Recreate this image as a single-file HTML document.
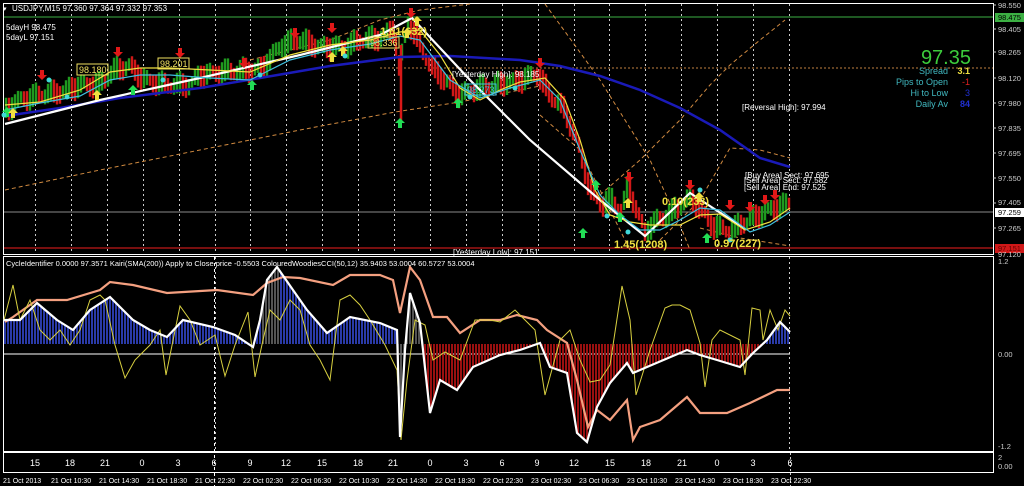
<!DOCTYPE html>
<html><head><meta charset="utf-8">
<style>
html,body{margin:0;padding:0;background:#000;overflow:hidden}
svg{display:block;font-family:"Liberation Sans",sans-serif}
</style></head><body>
<svg id="s" width="1024" height="486" viewBox="0 0 1024 486" xmlns="http://www.w3.org/2000/svg">
<rect width="1024" height="486" fill="#000"/>
<g id="grid"></g>
<rect x="3.5" y="3.5" width="990" height="251" fill="none" stroke="#fff" stroke-width="1"/>
<rect x="3.5" y="256.5" width="990" height="195" fill="none" stroke="#fff" stroke-width="1"/>
<rect x="3.5" y="452.5" width="990" height="20" fill="none" stroke="#fff" stroke-width="1"/>
<line x1="4" y1="17" x2="993" y2="17" stroke="#3cb043" stroke-width="1"/>
<line x1="4" y1="212" x2="993" y2="212" stroke="#8a8a8a" stroke-width="1"/>
<line x1="4" y1="248" x2="993" y2="248" stroke="#c01818" stroke-width="1.3"/>
<line x1="380" y1="68" x2="993" y2="68" stroke="#c08040" stroke-width="1" stroke-dasharray="2,2"/>
<line x1="4" y1="354" x2="790" y2="354" stroke="#fff" stroke-width="1"/>
<g fill="none" stroke="#d08a40" stroke-width="1" stroke-dasharray="4,3">
<polyline points="5,190 100,170 200,150 300,130 395,112 460,102 540,86"/>
<polyline points="250,60 330,40 380,20 420,10 470,4"/>
<polyline points="545,4 600,80 650,160 680,225 690,250"/>
<polyline points="600,195 640,160 680,120 710,85 730,65 760,40 785,20"/>
<polyline points="660,240 700,200 730,148 760,150 790,158"/>
<polyline points="540,115 580,150 610,210 630,250"/>
<polyline points="700,228 740,238 790,246"/>
</g>
<g id="candles"></g>
<g id="lower"></g>
<polyline fill="none" stroke="#1a1ab8" stroke-width="2.5" points="5,116 60,108 120,98 200,88 260,78 330,66 400,57 450,56 520,60 560,66 600,76 640,90 680,108 720,130 760,158 790,167"/>
<polyline fill="none" stroke="#fff" stroke-width="2.2" points="5,124 100,100 200,78 300,55 380,35 412,18 470,80 530,140 600,200 645,236 690,193 745,229"/>
<polyline fill="none" stroke="#f0e040" stroke-width="1.2" points="5,105 40,102 80,90 110,72 140,68 170,68 210,70 250,72 290,55 330,45 370,40 400,32 420,30 440,55 460,88 480,100 500,90 520,82 545,78 565,100 580,140 595,190 610,215 630,222 650,225 680,225 700,215 720,214 745,230 770,222 790,208"/>
<polyline fill="none" stroke="#40c0e0" stroke-width="1.2" points="5,110 40,103 80,96 110,80 140,75 170,75 210,78 250,80 290,60 330,50 370,44 400,36 420,40 450,80 480,98 510,88 540,80 560,100 580,150 600,195 620,215 640,230 660,230 680,220 700,208 720,210 750,232 770,225 790,212"/>
<g id="marks"></g>
<g font-size="8" fill="#fff">
<text x="3" y="11" font-size="7">▾</text>
<text x="12" y="11">USDJPY,M15  97.360 97.364 97.332 97.353</text>
<text x="6" y="30">5dayH 98.475</text>
<text x="6" y="40">5dayL 97.151</text>
<text x="452" y="77">[Yesterday High]: 98.185</text>
<text x="742" y="110">[Reversal High]: 97.994</text>
<text x="745" y="178">[Buy Area] Sect: 97.695</text>
<text x="744" y="183">[Sell Area] Sect: 97.582</text>
<text x="744" y="190">[Sell Area] End: 97.525</text>
<text x="453" y="255">[Yesterday Low]: 97.151</text>
</g>
<g font-size="9" fill="#f0e060">
<rect x="77" y="64" width="31" height="11" fill="none" stroke="#f0e060"/><text x="79" y="73">98.180</text>
<rect x="158" y="58" width="31" height="11" fill="none" stroke="#f0e060"/><text x="160" y="67">98.201</text>
<rect x="368" y="37" width="31" height="11" fill="none" stroke="#f0e060"/><text x="370" y="46">98.336</text>
<rect x="465" y="84" width="31" height="11" fill="none" stroke="#40c0e0"/><text x="467" y="93" fill="#40c0e0">98.273</text>
</g>
<g font-size="11" font-weight="bold" fill="#f0e040">
<text x="380" y="35">1.61(632)</text>
<text x="662" y="205">0.10(233)</text>
<text x="614" y="248">1.45(1208)</text>
<text x="714" y="247">0.97(227)</text>
</g>
<g font-size="9" text-anchor="end">
<text x="971" y="64" font-size="20" fill="#3ccc3c">97.35</text>
<text x="948" y="74" fill="#40b8c0">Spread</text><text x="970" y="74" fill="#f0e040" font-weight="bold">3.1</text>
<text x="948" y="85" fill="#40b8c0">Pips to Open</text><text x="970" y="85" fill="#e02020">-1</text>
<text x="948" y="96" fill="#40b8c0">Hi to Low</text><text x="970" y="96" fill="#2030d0">3</text>
<text x="948" y="107" fill="#40b8c0">Daily Av</text><text x="970" y="107" fill="#2030d0" font-weight="bold">84</text>
</g>
<g font-size="7.5" fill="#ccc">
<text x="998" y="8">98.550</text>
<rect x="995" y="13" width="29" height="9" fill="#3cb043"/><text x="998" y="20" fill="#000">98.475</text>
<text x="998" y="32">98.405</text>
<text x="998" y="55">98.265</text>
<text x="998" y="81">98.120</text>
<text x="998" y="106">97.980</text>
<text x="998" y="131">97.835</text>
<text x="998" y="156">97.695</text>
<text x="998" y="181">97.550</text>
<text x="998" y="205">97.405</text>
<rect x="995" y="208" width="29" height="9" fill="#fff"/><text x="998" y="215" fill="#000">97.259</text>
<text x="998" y="231">97.265</text>
<rect x="995" y="244" width="29" height="9" fill="#d01818"/><text x="998" y="251" fill="#600">97.151</text>
<text x="998" y="257">97.120</text>
<text x="998" y="264">1.2</text>
<text x="998" y="357">0.00</text>
<text x="998" y="449">-1.2</text>
<text x="998" y="460">2</text>
<text x="998" y="469">0.00</text>
</g>
<g stroke="#ccc"><line x1="993" y1="5" x2="996" y2="5"/><line x1="993" y1="29" x2="996" y2="29"/><line x1="993" y1="52" x2="996" y2="52"/><line x1="993" y1="78" x2="996" y2="78"/><line x1="993" y1="103" x2="996" y2="103"/><line x1="993" y1="128" x2="996" y2="128"/><line x1="993" y1="153" x2="996" y2="153"/><line x1="993" y1="178" x2="996" y2="178"/><line x1="993" y1="203" x2="996" y2="203"/><line x1="993" y1="228" x2="996" y2="228"/></g>
<text x="6" y="266" font-size="7.5" fill="#fff">CycleIdentifier 0.0000 97.3571  Kairi(SMA(200)) Apply to Close price -0.5503  ColouredWoodiesCCI(50,12) 35.9403 53.0004 60.5727 53.0004</text>
<g font-size="9" fill="#fff" text-anchor="middle">
<text x="35" y="466">15</text><text x="70" y="466">18</text><text x="105" y="466">21</text><text x="142" y="466">0</text><text x="178" y="466">3</text><text x="214" y="466">6</text><text x="250" y="466">9</text><text x="286" y="466">12</text><text x="322" y="466">15</text><text x="358" y="466">18</text><text x="393" y="466">21</text><text x="430" y="466">0</text><text x="466" y="466">3</text><text x="502" y="466">6</text><text x="537" y="466">9</text><text x="574" y="466">12</text><text x="610" y="466">15</text><text x="646" y="466">18</text><text x="682" y="466">21</text><text x="717" y="466">0</text><text x="753" y="466">3</text><text x="790" y="466">6</text>
</g>
<g font-size="7" fill="#fff">
<text x="3" y="483">21 Oct 2013</text><text x="51" y="483">21 Oct 10:30</text><text x="99" y="483">21 Oct 14:30</text><text x="147" y="483">21 Oct 18:30</text><text x="195" y="483">21 Oct 22:30</text><text x="243" y="483">22 Oct 02:30</text><text x="291" y="483">22 Oct 06:30</text><text x="339" y="483">22 Oct 10:30</text><text x="387" y="483">22 Oct 14:30</text><text x="435" y="483">22 Oct 18:30</text><text x="483" y="483">22 Oct 22:30</text><text x="531" y="483">23 Oct 02:30</text><text x="579" y="483">23 Oct 06:30</text><text x="627" y="483">23 Oct 10:30</text><text x="675" y="483">23 Oct 14:30</text><text x="723" y="483">23 Oct 18:30</text><text x="771" y="483">23 Oct 22:30</text>
</g>
</svg>
<script>
var NS="http://www.w3.org/2000/svg";
function el(p,t,a){var e=document.createElementNS(NS,t);for(var k in a)e.setAttribute(k,a[k]);document.getElementById(p).appendChild(e);return e;}
function interp(pts,x){for(var i=0;i<pts.length-1;i++){if(x>=pts[i][0]&&x<=pts[i+1][0]){var t=(x-pts[i][0])/(pts[i+1][0]-pts[i][0]);return pts[i][1]+t*(pts[i+1][1]-pts[i][1]);}}return x<pts[0][0]?pts[0][1]:pts[pts.length-1][1];}
for(var k=0;k<22;k++){var x=Math.round(35+35.9*k)+.5;
el("grid","line",{x1:x,y1:4,x2:x,y2:254,stroke:"#ccc","stroke-width":1,"stroke-dasharray":"2,3"});
el("grid","line",{x1:x,y1:257,x2:x,y2:451,stroke:"#ccc","stroke-width":1,"stroke-dasharray":"2,3",opacity:(x>213&&x<216||x>789)?1:0})}
el("grid","line",{x1:214.5,y1:257,x2:214.5,y2:486,stroke:"#fff","stroke-dasharray":"3,3"});
el("grid","line",{x1:790.5,y1:453,x2:790.5,y2:486,stroke:"#ccc","stroke-dasharray":"2,2"});
var P=[[6,110],[20,100],[40,95],[60,92],[80,85],[100,85],[115,70],[130,66],[145,80],[165,85],[190,85],[200,75],[225,72],[250,70],[262,68],[282,45],[300,40],[320,47],[345,47],[362,40],[380,38],[395,28],[398,70],[402,55],[408,22],[418,40],[430,65],[445,80],[460,95],[480,88],[500,84],[520,80],[538,74],[550,95],[565,110],[580,150],[590,190],[602,205],[612,200],[622,212],[628,185],[635,205],[645,232],[655,222],[670,214],[690,198],[700,208],[712,225],[730,232],[745,222],[770,210],[790,203]];
var r="",g="",prev=interp(P,5);
for(var x=6;x<=790;x+=3){var y=interp(P,x)+Math.sin(x*1.7)*3;var col=(y<prev)?"g":"r";var h=11+Math.abs(Math.sin(x*0.9))*12;
var seg="M"+x+" "+(y-h/2).toFixed(1)+"V"+(y+h/2).toFixed(1);if(col=="g")g+=seg;else r+=seg;prev=y;}
el("candles","path",{d:g,stroke:"#1f9a1f","stroke-width":2.4});
el("candles","path",{d:r,stroke:"#d01818","stroke-width":2.4});
el("candles","path",{d:"M401 45V120",stroke:"#d81818","stroke-width":2.5});
function arrow(x,y,up,c){var s=up?"M"+x+" "+y+"l-5 5h3v5h4v-5h3z":"M"+x+" "+y+"l-5 -5h3v-5h4v5h3z";el("marks","path",{d:s,fill:c});}
[[42,80],[118,57],[180,58],[244,68],[295,38],[332,33],[411,18],[540,68],[629,182],[690,190],[730,210],[750,212],[765,205],[775,200]].forEach(function(a){arrow(a[0],a[1],false,"#e01818")});
[[7,107],[133,85],[252,80],[400,118],[458,98],[583,228],[620,212],[707,233],[596,180]].forEach(function(a){arrow(a[0],a[1],true,"#22dd55")});
[[13,108],[97,90],[332,52],[343,46],[407,28],[417,16],[628,198],[699,192]].forEach(function(a){arrow(a[0],a[1],true,"#f0e040")});
[[4,115],[49,80],[67,97],[163,80],[260,75],[345,56],[470,97],[515,88],[607,216],[628,232],[700,190],[730,240]].forEach(function(a){el("marks","circle",{cx:a[0],cy:a[1],r:2.5,fill:"#40d8d8"})});
var W=[[4,320],[20,320],[37,303],[57,320],[73,330],[90,310],[110,297],[133,320],[150,330],[167,337],[183,320],[213,327],[235,335],[253,347],[260,320],[267,280],[277,267],[293,290],[307,310],[327,333],[350,317],[380,323],[397,330],[400,437],[405,350],[410,293],[420,323],[430,413],[440,380],[457,390],[473,367],[500,355],[520,350],[540,343],[550,367],[567,373],[577,433],[587,442],[597,407],[610,383],[627,363],[633,373],[647,367],[687,350],[700,355],[717,360],[740,367],[753,353],[767,340],[780,322],[790,332]];
var S=[[5,322],[13,317],[37,300],[67,300],[100,290],[110,282],[133,285],[167,293],[217,290],[253,295],[267,283],[283,277],[300,278],[333,285],[350,275],[380,275],[393,280],[400,313],[410,267],[420,280],[433,317],[447,317],[460,333],[480,320],[500,320],[517,315],[537,320],[547,330],[567,343],[577,380],[588,427],[597,410],[610,420],[627,400],[633,440],[640,427],[660,420],[687,397],[700,413],[727,413],[750,403],[777,390],[790,390]];
var Y=[[4,320],[13,285],[20,320],[30,300],[40,330],[50,340],[60,330],[70,345],[80,330],[90,300],[100,295],[105,300],[115,345],[125,378],[135,360],[150,345],[160,330],[166,375],[180,306],[190,320],[200,345],[215,335],[225,376],[235,345],[248,312],[255,377],[263,340],[270,310],[280,320],[290,300],[300,310],[310,345],[320,360],[330,380],[340,300],[350,295],[360,305],[370,320],[385,345],[397,370],[401,440],[407,380],[415,320],[425,325],[433,360],[445,352],[460,360],[475,320],[490,320],[500,322],[515,310],[525,320],[535,330],[545,395],[560,340],[570,330],[580,360],[590,382],[600,380],[610,365],[622,286],[630,320],[636,395],[650,350],[665,308],[672,305],[680,305],[690,310],[700,343],[705,387],[712,340],[720,330],[740,340],[745,375],[752,308],[760,310],[763,340],[770,310],[778,330],[785,310],[790,316]];
var bb="",rb="",gb="";
for(var x=5;x<=790;x+=3){var w=interp(W,x);if(w<344){(x>260&&x<280)||(x>395&&x<440)?gb+="M"+x+" 344V"+w:bb+="M"+x+" 344V"+w;}else if(x>420){rb+="M"+x+" 344V"+w;}else gb+="M"+x+" 344V"+w;}
el("lower","path",{d:bb,stroke:"#2a3aa8","stroke-width":2});
el("lower","path",{d:rb,stroke:"#9a1010","stroke-width":2});
el("lower","path",{d:gb,stroke:"#707070","stroke-width":1.5});
function pl(pts,c,w){el("lower","polyline",{points:pts.map(function(p){return p.join(",")}).join(" "),fill:"none",stroke:c,"stroke-width":w});}
pl(S,"#f4a080",2.2);pl(Y,"#d8d040",1);pl(W,"#fff",2.2);
</script>
</body></html>
